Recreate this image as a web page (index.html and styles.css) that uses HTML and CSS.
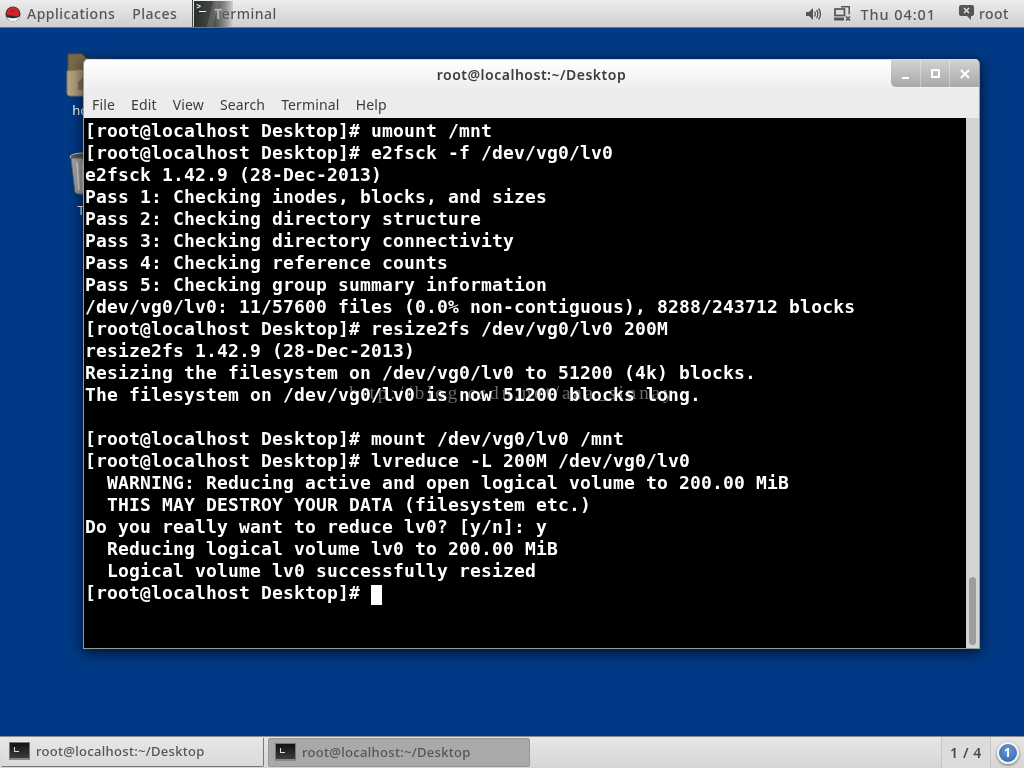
FILE: index.html
```html
<!DOCTYPE html>
<html lang="en">
<head>
<meta charset="utf-8">
<title>root@localhost:~/Desktop</title>
<link rel="stylesheet" href="styles.css">
</head>
<body>
<div class="screen">
  <header class="topbar">
    <div class="top-left">
      <svg class="hat" width="16" height="16" viewBox="0 0 16 16"><circle cx="8" cy="8" r="7.500" fill="#2a2a2a"/><path d="M1.500 10.500C3.500 12.500 12 13 15 10c-1 3.500-4 5.500-7 5.500S2.500 13.500 1.500 10.500z" fill="#f2f2f2"/><path d="M1.500 8.500C1.500 4 4.500 1 8 1c4 0 6.500 3 6.500 7 0 1.500-1 2.500-3 2.500-3 0-5-1.500-9-1.200z" fill="#d2232a"/><path d="M5 4.500C7 3.500 9 3.500 10.500 5 8.500 6 6.500 5.800 5 4.500z" fill="#a81a1f"/></svg>
      <span class="menu-label apps">Applications</span>
      <span class="menu-label places">Places</span>
      <div class="app-menu">
        <div class="app-thumb">
          <span class="thumb-prompt">&gt;</span>
          <span class="thumb-dash"></span>
          <span class="thumb-streak"></span>
        </div>
        <span class="menu-label app-name">Terminal</span>
      </div>
    </div>
    <div class="top-right">
      <svg class="tray-vol" width="15" height="14" viewBox="0 0 15 14"><path d="M0 5h3l4-4v12l-4-4H0z" fill="#555"/><path d="M8.500 4.500c1 1.500 1 3.500 0 5M10.500 3c1.800 2.200 1.800 5.800 0 8M12.500 1.500c2.600 3 2.600 8 0 11" fill="none" stroke="#555" stroke-width="1.300"/></svg>
      <svg class="tray-net" width="17" height="15" viewBox="0 0 17 15"><path d="M7 .8h8.200v7.500" fill="none" stroke="#555" stroke-width="1.500"/><rect x="1" y="3" width="9.500" height="6.500" fill="#ddd" stroke="#555" stroke-width="1.700"/><path d="M0 11.500h10V14.500H0z" fill="#555"/><path d="M12 10.500l4 4M16 10.500l-4 4" stroke="#555" stroke-width="1.600"/></svg>
      <span class="menu-label clock">Thu 04:01</span>
      <svg class="tray-chat" width="15" height="15" viewBox="0 0 15 15"><path d="M2 0h11a2 2 0 0 1 2 2v7a2 2 0 0 1-2 2h-1v4l-4-4H2a2 2 0 0 1-2-2V2a2 2 0 0 1 2-2z" fill="#555"/><path d="M5 3l5 5M10 3L5 8" stroke="#ddd" stroke-width="1.600"/></svg>
      <span class="menu-label user">root</span>
    </div>
  </header>

  <main class="desktop">
    <div class="desk-icon desk-home">
      <svg width="48" height="46" viewBox="0 0 48 46"><path d="M2 1h14l5 5h20v30H2z" fill="#7d6a4c" stroke="#5f5038"/><path d="M1 18l40-4 2 26a3 3 0 0 1-3 3H4a3 3 0 0 1-3-3z" fill="#b6a482" stroke="#8a7a5c"/><path d="M12 29l8-7 8 7v8H12z" fill="#8a7a5c"/></svg>
      <span class="desk-label">home</span>
    </div>
    <div class="desk-icon desk-trash">
      <svg width="48" height="46" viewBox="0 0 48 46"><ellipse cx="14" cy="5" rx="13" ry="4" fill="#555" stroke="#c8c8c8"/><path d="M2 6l4 34c1 3 15 3 16 0l4-34z" fill="#a9a9a9" stroke="#666"/><path d="M8 10l2 28M14 10v29M20 10l-2 28" stroke="#e2e2e2" stroke-width="1.500"/></svg>
      <span class="desk-label">Trash</span>
    </div>

    <section class="window">
      <div class="titlebar">
        <span class="win-title">root@localhost:~/Desktop</span>
        <div class="win-buttons">
          <span class="win-btn"><i class="glyph-min"></i></span>
          <span class="win-btn"><i class="glyph-max"></i></span>
          <span class="win-btn"><svg width="10" height="10" viewBox="0 0 10 10"><path d="M1 1l8 8M9 1l-8 8" stroke="#fff" stroke-width="2.200"/></svg></span>
        </div>
      </div>
      <nav class="menubar">
        <span>File</span><span>Edit</span><span>View</span><span>Search</span><span>Terminal</span><span>Help</span>
      </nav>
      <div class="term-area">
<pre class="terminal">[root@localhost Desktop]# umount /mnt
[root@localhost Desktop]# e2fsck -f /dev/vg0/lv0
e2fsck 1.42.9 (28-Dec-2013)
Pass 1: Checking inodes, blocks, and sizes
Pass 2: Checking directory structure
Pass 3: Checking directory connectivity
Pass 4: Checking reference counts
Pass 5: Checking group summary information
/dev/vg0/lv0: 11/57600 files (0.0% non-contiguous), 8288/243712 blocks
[root@localhost Desktop]# resize2fs /dev/vg0/lv0 200M
resize2fs 1.42.9 (28-Dec-2013)
Resizing the filesystem on /dev/vg0/lv0 to 51200 (4k) blocks.
The filesystem on /dev/vg0/lv0 is now 51200 blocks long.

[root@localhost Desktop]# mount /dev/vg0/lv0 /mnt
[root@localhost Desktop]# lvreduce -L 200M /dev/vg0/lv0
  WARNING: Reducing active and open logical volume to 200.00 MiB
  THIS MAY DESTROY YOUR DATA (filesystem etc.)
Do you really want to reduce lv0? [y/n]: y
  Reducing logical volume lv0 to 200.00 MiB
  Logical volume lv0 successfully resized
[root@localhost Desktop]# <span class="cursor"> </span></pre>
        <div class="scrollbar"><div class="scroll-thumb"></div></div>
      </div>
    </section>
    <div class="watermark">http://blog.csdn.net/aaa_sinnay</div>
  </main>

  <footer class="taskbar">
    <div class="tasks">
      <div class="task task-first">
        <span class="task-icon"><span class="task-prompt"></span></span>
        <span class="task-text">root@localhost:~/Desktop</span>
      </div>
      <div class="task task-active">
        <span class="task-icon"><span class="task-prompt"></span></span>
        <span class="task-text">root@localhost:~/Desktop</span>
      </div>
    </div>
    <div class="pager">1 / 4</div>
    <div class="notify"><span class="notify-badge">1</span></div>
  </footer>
</div>
</body>
</html>
```

FILE: styles.css
```css
* { box-sizing: border-box; }
html, body { margin: 0; padding: 0; }
body { width: 1024px; height: 768px; overflow: hidden; font-family: "Noto Sans", "DejaVu Sans", sans-serif; }
.screen { width: 1024px; height: 768px; display: flex; flex-direction: column; background: #003a86; }

.topbar { height: 28px; flex: none; display: flex; justify-content: space-between; background: linear-gradient(#ededed, #cfcfcf); border-bottom: 1px solid #777; }
.top-left, .top-right { display: flex; align-items: center; }
.menu-label { font-size: 14px; font-weight: 500; color: #555; letter-spacing: .5px; white-space: nowrap; }
.hat { margin-left: 5px; }
.apps { margin-left: 6px; }
.places { margin-left: 17px; }
.app-menu { display: flex; align-items: center; height: 27px; margin-left: 15px; border-left: 1px solid #444; padding-left: 1px; }
.app-thumb { width: 39px; height: 26px; position: relative; overflow: hidden; background: linear-gradient(90deg, #2b2e2b 0%, #464a46 50%, #8c8f8c 80%, #cfcfcf 100%); }
.thumb-prompt { display: block; color: #eee; font: bold 8px/9px "DejaVu Sans Mono", monospace; padding: 1px 0 0 2px; }
.thumb-dash { position: absolute; left: 5px; top: 10px; width: 7px; height: 1px; background: #eee; }
.thumb-streak { position: absolute; left: 16px; top: -2px; width: 6px; height: 30px; background: rgba(255,255,255,.14); transform: skewX(-14deg); }
.app-name { margin-left: -19px; position: relative; text-shadow: 0 0 2px rgba(255,255,255,.45); }
.app-name::first-letter { color: #b9b9b9; }
.tray-vol { margin-right: 13px; }
.tray-net { margin-right: 10px; }
.clock { margin-right: 23px; font-size: 14.500px; letter-spacing: .9px; }
.tray-chat { margin-right: 5px; margin-top: -3px; }
.user { margin-right: 15px; }

.desktop { flex: 1; position: relative; }
.desk-icon { position: absolute; width: 80px; display: flex; flex-direction: column; align-items: center; }
.desk-home { left: 50px; top: 25px; }
.desk-trash { left: 54px; top: 124px; }
.desk-home svg { margin-left: 0; }
.desk-trash svg { margin-left: -2px; }
.desk-label { color: #fff; font-size: 13px; line-height: 16px; margin-top: 3px; }
.desk-trash .desk-label { margin-top: 4px; }

.window { position: absolute; left: 83px; top: 31px; width: 897px; height: 590px; display: flex; flex-direction: column; background: #ececec; border: 1px solid #9a9a9a; border-top-color: #ddd; border-radius: 5px 5px 0 0; box-shadow: 0 3px 16px rgba(0,0,0,.75); }
.titlebar { height: 32px; flex: none; position: relative; display: flex; align-items: center; justify-content: center; padding-bottom: 4px; background: linear-gradient(#ffffff, #ececec); border-radius: 5px 5px 0 0; }
.win-title { font-size: 14px; font-weight: 600; color: #3c3c3c; letter-spacing: .5px; }
.win-buttons { position: absolute; right: 0; top: 0; width: 88px; height: 28px; display: flex; background: linear-gradient(#d2d2d2, #a8a8a8); border-radius: 0 4px 0 5px; border-bottom: 1px solid #f4f4f4; }
.win-btn { flex: 1; display: flex; align-items: center; justify-content: center; border-left: 1px solid rgba(255,255,255,.35); }
.win-btn:first-child { border-left: 0; }
.glyph-min { display: block; width: 7px; height: 2px; background: #fff; margin-top: 8px; }
.glyph-max { display: block; width: 9px; height: 9px; border: 2px solid #fff; margin-top: -1px; }

.menubar { height: 26px; flex: none; display: flex; align-items: center; gap: 16px; padding: 0 0 2px 8px; font-size: 14px; letter-spacing: .15px; color: #3c3c3c; background: #ececec; }
.term-area { flex: 1; min-height: 0; display: flex; background: #000; }
.terminal { flex: 1; margin: 0; padding: 2px 0 0 1px; background: #000; color: #fff; font-family: "DejaVu Sans Mono", "Liberation Mono", monospace; font-weight: 700; font-size: 18px; letter-spacing: .165px; line-height: 22px; overflow: hidden; }
.cursor { display: inline-block; width: 11px; height: 20px; background: #fff; vertical-align: -3px; }
.scrollbar { width: 13px; flex: none; background: #d4d4d4; padding: 459px 2px 3px 3px; }
.scroll-thumb { height: 68px; width: 7px; background: #9c9c9c; border-radius: 4px; }

.watermark { position: absolute; left: 349px; top: 354px; font: 19px/22px "Liberation Serif", serif; color: #6a6a6a; letter-spacing: 2.900px; white-space: nowrap; mix-blend-mode: lighten; }

.taskbar { height: 32px; flex: none; display: flex; align-items: stretch; background: linear-gradient(#e6e6e6, #d6d6d6); border-top: 1px solid #8a8a8a; }
.tasks { flex: 1; display: flex; gap: 4px; padding: 1px 0 0 2px; }
.task { width: 262px; margin-bottom: 1px; display: flex; align-items: center; gap: 6px; padding: 0 0 2px 7px; }
.task-first { background: linear-gradient(#e6e6e6, #dadada); border-right: 1px solid #777; border-bottom: 1px solid #777; border-radius: 0 0 2px 0; }
.task-active { padding-left: 6px; background: #a9a9a9; border: 1px solid #979797; border-radius: 2px; }
.task-icon { width: 21px; height: 18px; flex: none; display: block; padding: 4px 0 0 4px; background: linear-gradient(#111, #3a3f3a); border: 1px solid #777; border-bottom: 2px solid #888; }
.task-prompt { display: block; width: 5px; height: 5px; border-bottom: 1px solid #ddd; border-left: 1px solid #ddd; }
.task-text { font-size: 13px; font-weight: 500; color: #555; letter-spacing: .3px; white-space: nowrap; }
.pager { width: 50px; flex: none; display: flex; align-items: center; justify-content: center; background: #dcdcdc; border-left: 1px solid #c6c6c6; border-right: 1px solid #c6c6c6; font-size: 14px; font-weight: 600; color: #4a4a4a; letter-spacing: .6px; }
.notify { width: 33px; flex: none; display: flex; align-items: center; justify-content: center; }
.notify-badge { width: 22px; height: 22px; border-radius: 50%; display: flex; align-items: center; justify-content: center; background: radial-gradient(circle at 50% 35%, #6c9ad2, #2c62ab); border: 2px solid #f4f4f4; box-shadow: 0 1px 3px rgba(0,0,0,.5); color: #fff; font-size: 12px; font-weight: 700; }
```
